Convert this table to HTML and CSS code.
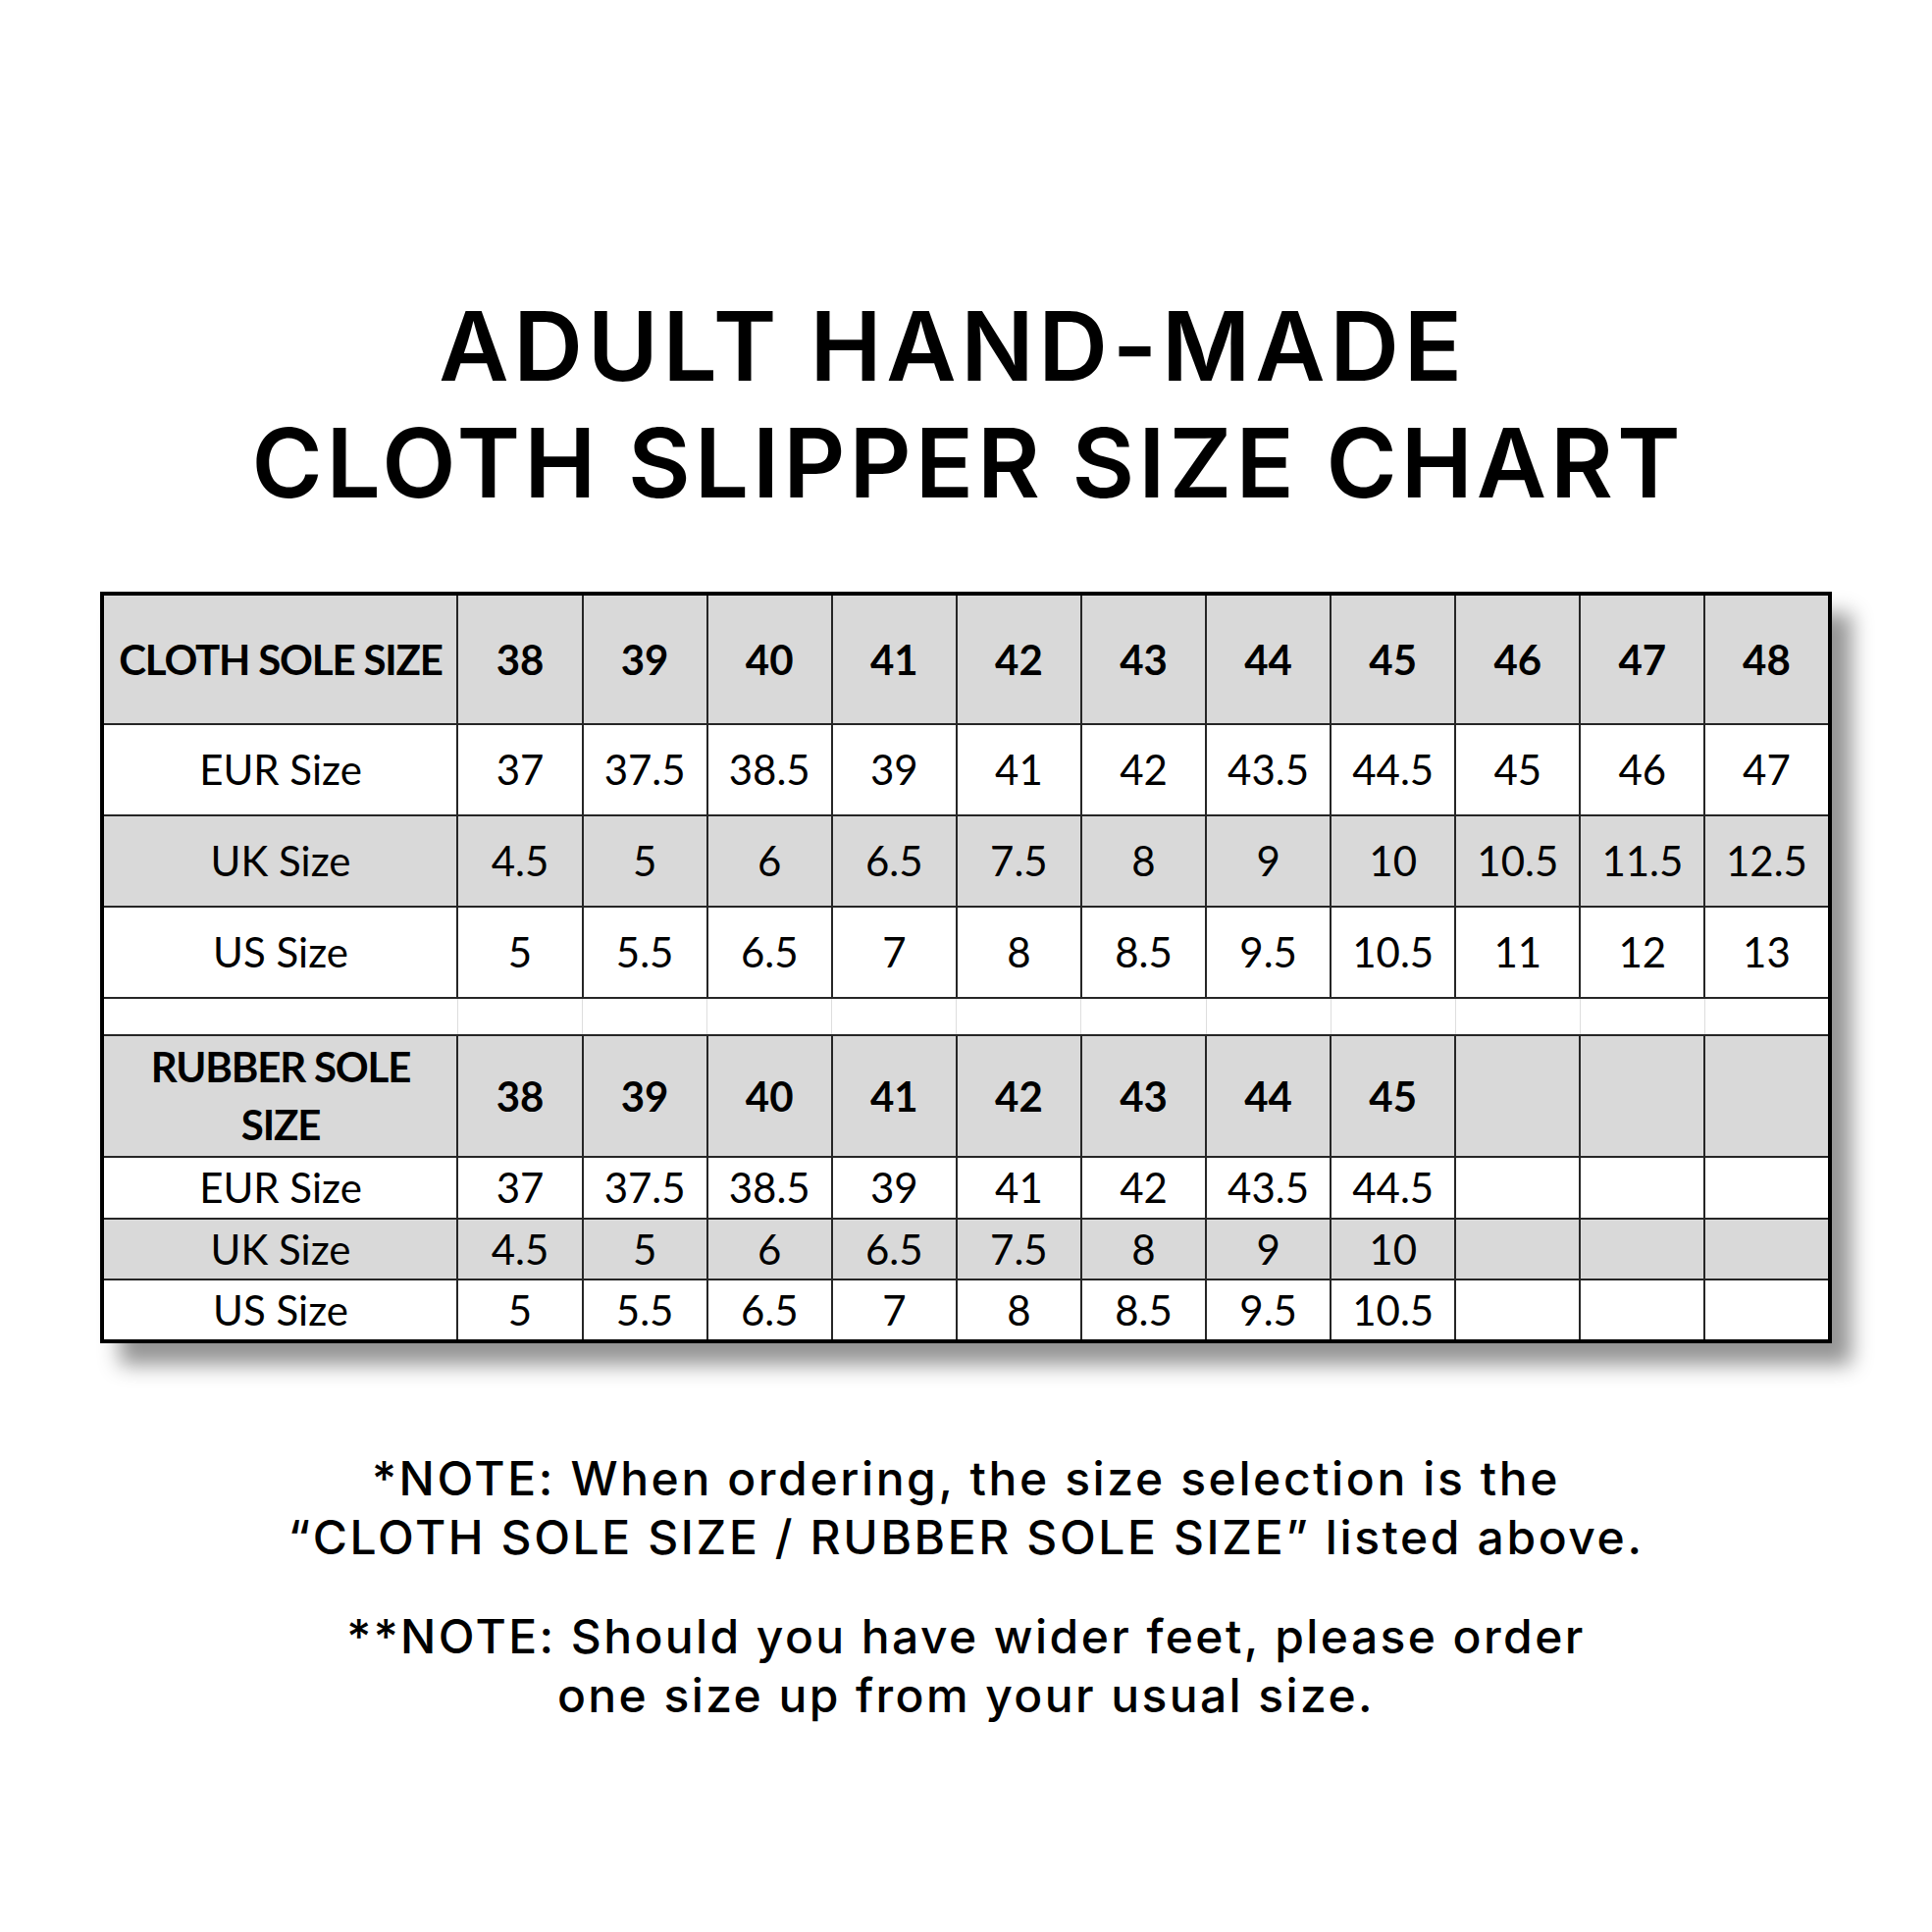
FILE: index.html
```html
<!DOCTYPE html>
<html lang="en">
<head>
<meta charset="utf-8">
<title>Adult Hand-Made Cloth Slipper Size Chart</title>
<link rel="stylesheet" href="styles.css">
</head>
<body>
<main class="page">
  <h1 class="title"><span class="title-line first">ADULT HAND-MADE</span><span class="title-line">CLOTH SLIPPER SIZE CHART</span></h1>

  <table class="chart">
    <colgroup>
      <col class="c-label">
      <col class="c-num"><col class="c-num"><col class="c-num"><col class="c-num"><col class="c-num">
      <col class="c-num"><col class="c-num"><col class="c-num"><col class="c-num"><col class="c-num"><col class="c-num">
    </colgroup>
    <tbody>
      <tr class="gray head r-head">
        <td class="label">CLOTH SOLE SIZE</td>
        <td>38</td><td>39</td><td>40</td><td>41</td><td>42</td><td>43</td><td>44</td><td>45</td><td>46</td><td>47</td><td>48</td>
      </tr>
      <tr class="r-big">
        <td>EUR Size</td>
        <td>37</td><td>37.5</td><td>38.5</td><td>39</td><td>41</td><td>42</td><td>43.5</td><td>44.5</td><td>45</td><td>46</td><td>47</td>
      </tr>
      <tr class="gray r-big">
        <td>UK Size</td>
        <td>4.5</td><td>5</td><td>6</td><td>6.5</td><td>7.5</td><td>8</td><td>9</td><td>10</td><td>10.5</td><td>11.5</td><td>12.5</td>
      </tr>
      <tr class="r-big">
        <td>US Size</td>
        <td>5</td><td>5.5</td><td>6.5</td><td>7</td><td>8</td><td>8.5</td><td>9.5</td><td>10.5</td><td>11</td><td>12</td><td>13</td>
      </tr>
      <tr class="spacer">
        <td></td><td></td><td></td><td></td><td></td><td></td><td></td><td></td><td></td><td></td><td></td><td></td>
      </tr>
      <tr class="gray head r-head2">
        <td class="label two-line">RUBBER SOLE<br>SIZE</td>
        <td>38</td><td>39</td><td>40</td><td>41</td><td>42</td><td>43</td><td>44</td><td>45</td><td></td><td></td><td></td>
      </tr>
      <tr class="r-small">
        <td>EUR Size</td>
        <td>37</td><td>37.5</td><td>38.5</td><td>39</td><td>41</td><td>42</td><td>43.5</td><td>44.5</td><td></td><td></td><td></td>
      </tr>
      <tr class="gray r-small">
        <td>UK Size</td>
        <td>4.5</td><td>5</td><td>6</td><td>6.5</td><td>7.5</td><td>8</td><td>9</td><td>10</td><td></td><td></td><td></td>
      </tr>
      <tr class="r-small">
        <td>US Size</td>
        <td>5</td><td>5.5</td><td>6.5</td><td>7</td><td>8</td><td>8.5</td><td>9.5</td><td>10.5</td><td></td><td></td><td></td>
      </tr>
    </tbody>
  </table>

  <section class="notes">
    <p>*NOTE: When ordering, the size selection is the<br>“CLOTH SOLE SIZE / RUBBER SOLE SIZE” listed above.</p>
    <p class="second">**NOTE: Should you have wider feet, please order<br>one size up from your usual size.</p>
  </section>
</main>
</body>
</html>
```

FILE: styles.css
```css
html, body {
  margin: 0;
  padding: 0;
  background: #ffffff;
}

.page {
  width: 1969px;
  padding-top: 293px;
  color: #000;
}

.title {
  margin: 0;
  font-family: Inter, "Liberation Sans", sans-serif;
  font-weight: 600;
  font-size: 98px;
  line-height: 119px;
  text-align: center;
  letter-spacing: 4px;
}

.title-line {
  display: block;
  padding-left: 4px;
}

.title-line.first {
  letter-spacing: 4.7px;
  padding-right: 31px;
}

.chart {
  margin: 72px auto 0;
  width: 1760px;
  border-collapse: collapse;
  table-layout: fixed;
  border: 4px solid #000;
  box-shadow: 20px 22px 20px rgba(0, 0, 0, 0.42);
  font-family: Lato, "Liberation Sans", sans-serif;
  font-size: 42px;
  color: #000;
}

.c-label { width: 362px; }
.c-num { width: 127.1px; }

.chart td {
  border: 2px solid #262626;
  padding: 0;
  text-align: center;
  vertical-align: middle;
  line-height: 1.2;
  background: #ffffff;
  white-space: nowrap;
}

.chart .gray td { background: #d9d9d9; }
.chart .head td { font-weight: 700; }
.chart .head .label { letter-spacing: -1.2px; }

.r-head { height: 133px; }
.r-big { height: 93px; }
.spacer { height: 38px; }
.r-head2 { height: 124px; }
.r-small { height: 62.5px; }

.chart .spacer td {
  border-left: 1px solid #dedede;
  border-right: 1px solid #dedede;
}

.chart .two-line { line-height: 59px; }

.notes {
  margin-top: 108px;
  font-family: Inter, "Liberation Sans", sans-serif;
  font-weight: 500;
  font-size: 48px;
  line-height: 60px;
  letter-spacing: 2.6px;
  text-align: center;
}

.notes p { margin: 0 0 41px; }
.notes .second { letter-spacing: 2.4px; }
```
